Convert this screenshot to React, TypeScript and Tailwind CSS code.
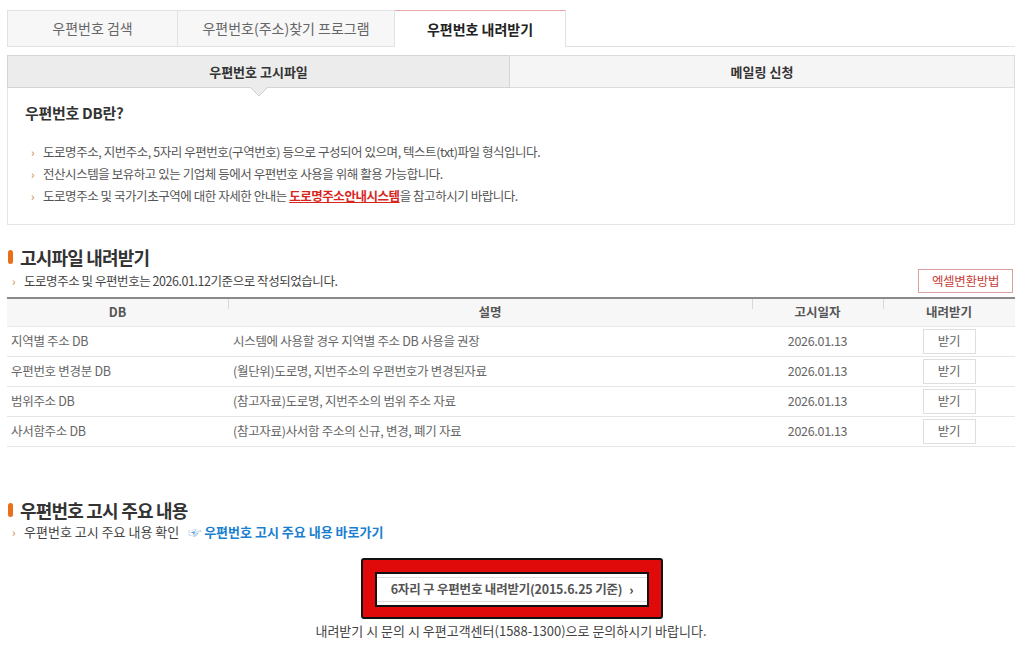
import React from "react";

const Bullet = () => (
  <span className="inline-block w-[12px] text-[11px] text-[#d9a066] font-bold shrink-0">›</span>
);

const rows = [
  ["지역별 주소 DB", "시스템에 사용할 경우 지역별 주소 DB 사용을 권장"],
  ["우편번호 변경분 DB", "(월단위)도로명, 지번주소의 우편번호가 변경된자료"],
  ["범위주소 DB", "(참고자료)도로명, 지번주소의 범위 주소 자료"],
  ["사서함주소 DB", "(참고자료)사서함 주소의 신규, 변경, 폐기 자료"],
];

export default function App() {
  return (
    <div className="w-[1024px] h-[654px] bg-white overflow-hidden font-['Noto_Sans_CJK_KR','Noto_Sans',sans-serif] text-[#555]">
      <div className="ml-[7px] w-[1008px] pt-[10px]">
        {/* Top tabs */}
        <div className="flex h-[37px] border-b border-[#e2e2e2]">
          <div className="w-[171px] h-[36px] flex items-center justify-center bg-[#f7f7f7] border border-[#e2e2e2] border-b-0 text-[14px] text-[#666]">
            우편번호 검색
          </div>
          <div className="w-[217px] h-[36px] flex items-center justify-center bg-[#f7f7f7] border-t border-r border-[#e2e2e2] text-[14px] text-[#666]">
            우편번호(주소)찾기 프로그램
          </div>
          <div className="w-[171px] h-[37px] flex items-center justify-center bg-white border-t border-t-[#e8a9a9] border-r border-[#e2e2e2] text-[14px] font-bold text-[#222] -mb-px">
            우편번호 내려받기
          </div>
        </div>

        {/* Sub tabs */}
        <div className="mt-[8px] flex h-[33px]">
          <div className="relative w-[503px] flex items-center justify-center bg-[#ececec] border border-[#d4d4d4] text-[13px] font-bold text-[#333]">
            우편번호 고시파일
            <svg
              className="absolute left-1/2 -translate-x-1/2 top-[31px]"
              width="18"
              height="10"
              viewBox="0 0 18 10"
            >
              <polygon points="0,0 18,0 9,9" fill="#ececec" />
              <polyline points="0,0 9,9 18,0" fill="none" stroke="#cfcfcf" strokeWidth="1" />
            </svg>
          </div>
          <div className="flex-1 flex items-center justify-center bg-[#f5f5f5] border-t border-r border-b border-[#dcdcdc] text-[13px] font-bold text-[#333]">
            메일링 신청
          </div>
        </div>

        {/* Info box */}
        <div className="border border-t-0 border-[#e5e5e5] pl-[17px] pt-[14px] pb-[17px]">
          <div className="text-[15px] font-bold text-[#333] leading-[22px] tracking-[-0.3px]">우편번호 DB란?</div>
          <div className="mt-[17px] pl-[6px] text-[12.5px] text-[#555] tracking-[-0.45px]">
            <div className="flex items-center h-[22px]">
              <Bullet />
              도로명주소, 지번주소, 5자리 우편번호(구역번호) 등으로 구성되어 있으며, 텍스트(txt)파일 형식입니다.
            </div>
            <div className="flex items-center h-[22px]">
              <Bullet />
              전산시스템을 보유하고 있는 기업체 등에서 우편번호 사용을 위해 활용 가능합니다.
            </div>
            <div className="flex items-center h-[22px]">
              <Bullet />
              도로명주소 및 국가기초구역에 대한 자세한 안내는&nbsp;
              <span className="text-[#d7261e] font-bold underline">도로명주소안내시스템</span>
              을 참고하시기 바랍니다.
            </div>
          </div>
        </div>

        {/* Section: 고시파일 내려받기 */}
        <div className="mt-[20px] flex items-center h-[24px]">
          <span className="w-[5px] h-[14px] rounded-full bg-[#e8701a] mr-[7px] ml-[1px]" />
          <span className="text-[18px] font-bold text-[#333] tracking-[-0.8px]">고시파일 내려받기</span>
        </div>
        <div className="flex items-center justify-between h-[24px]">
          <div className="flex items-center text-[12.5px] text-[#444] pl-[5px] tracking-[-0.45px]">
            <Bullet />
            도로명주소 및 우편번호는 2026.01.12기준으로 작성되었습니다.
          </div>
          <div className="w-[95px] h-[24px] mr-[2px] flex items-center justify-center border border-[#d9a0a0] text-[12.5px] text-[#c7403a] bg-white tracking-[-0.3px]">
            엑셀변환방법
          </div>
        </div>

        {/* Table */}
        <div className="mt-[4px] border-t-2 border-[#8a8a8a]">
          <div className="grid grid-cols-[221px_524px_131px_132px] h-[28px] bg-[#f7f7f7] border-b border-[#e8e8e8] text-[12.5px] font-bold text-[#555]">
            <div className="flex items-center justify-center">DB</div>
            <div className="relative flex items-center justify-center">
              <span className="absolute left-0 top-0 w-px h-[10px] bg-[#d8d8d8]" />
              설명
            </div>
            <div className="relative flex items-center justify-center">
              <span className="absolute left-0 top-0 w-px h-[10px] bg-[#d8d8d8]" />
              고시일자
            </div>
            <div className="relative flex items-center justify-center">
              <span className="absolute left-0 top-0 w-px h-[10px] bg-[#d8d8d8]" />
              내려받기
            </div>
          </div>
          {rows.map(([a, b]) => (
            <div
              key={a}
              className="grid grid-cols-[221px_524px_131px_132px] h-[30px] border-b border-[#e5e5e5] text-[12.5px] text-[#666] tracking-[-0.3px]"
            >
              <div className="flex items-center pl-[4px]">{a}</div>
              <div className="flex items-center pl-[5px]">{b}</div>
              <div className="flex items-center justify-center">2026.01.13</div>
              <div className="flex items-center justify-center">
                <div className="w-[53px] h-[25px] flex items-center justify-center border border-[#dedede] bg-white text-[12.5px] text-[#666]">
                  받기
                </div>
              </div>
            </div>
          ))}
        </div>

        {/* Section: 우편번호 고시 주요 내용 */}
        <div className="mt-[51px] flex items-center h-[24px]">
          <span className="w-[5px] h-[14px] rounded-full bg-[#e8701a] mr-[7px] ml-[1px]" />
          <span className="text-[18px] font-bold text-[#333] tracking-[-0.8px]">우편번호 고시 주요 내용</span>
        </div>
        <div className="flex items-center h-[20px] text-[13px] text-[#444] pl-[5px]">
          <Bullet />
          우편번호 고시 주요 내용 확인
          <span className="ml-[9px] text-[#1a7fd0] font-bold">
            <span className="font-normal text-[#5aa0dd]">☞</span> 우편번호 고시 주요 내용 바로가기
          </span>
        </div>

        {/* Highlighted old postcode button */}
        <div className="mt-[16px] flex justify-center">
          <div className="ml-[2px] border-2 border-[#111] rounded-[3px] bg-[#e10a0a] px-[12px] pt-[12px] pb-[10px]">
            <div className="border-2 border-[#111] bg-white w-[274px] h-[35px] py-[3px]">
              <div className="h-full border-y border-[#dedede] flex items-center justify-center text-[12.5px] font-bold text-[#555] tracking-[-0.2px]">
                6자리 구 우편번호 내려받기(2015.6.25 기준)
                <span className="ml-[7px] text-[#333] text-[13px]">›</span>
              </div>
            </div>
          </div>
        </div>
        <div className="mt-[2px] h-[20px] flex items-center justify-center text-[13px] text-[#444]">
          내려받기 시 문의 시 우편고객센터(1588-1300)으로 문의하시기 바랍니다.
        </div>
      </div>
    </div>
  );
}
